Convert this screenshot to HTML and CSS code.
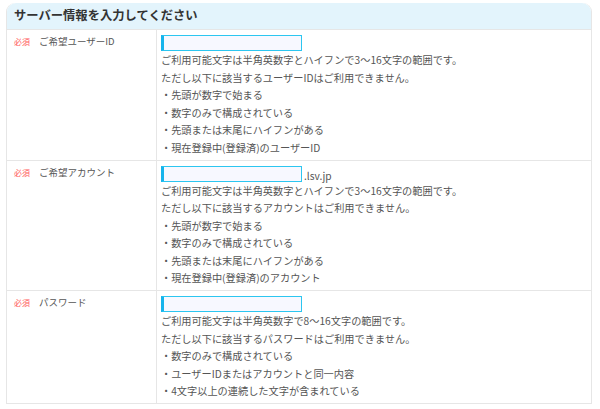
FILE: index.html
```html
<!DOCTYPE html>
<html lang="ja">
<head>
<meta charset="utf-8">
<link rel="stylesheet" href="styles.css">
</head>
<body>
<div class="panel">
  <div class="panel-head">サーバー情報を入力してください</div>
  <div class="row">
    <div class="label"><span class="req">必須</span><span class="name">ご希望ユーザーID</span></div>
    <div class="value">
      <div class="field"><span class="input"></span></div>
      <p>ご利用可能文字は半角英数字とハイフンで3～16文字の範囲です。</p>
      <p>ただし以下に該当するユーザーIDはご利用できません。</p>
      <p>・先頭が数字で始まる</p>
      <p>・数字のみで構成されている</p>
      <p>・先頭または末尾にハイフンがある</p>
      <p>・現在登録中(登録済)のユーザーID</p>
    </div>
  </div>
  <div class="row">
    <div class="label"><span class="req">必須</span><span class="name">ご希望アカウント</span></div>
    <div class="value">
      <div class="field"><span class="input"></span><span class="suffix">.lsv.jp</span></div>
      <p>ご利用可能文字は半角英数字とハイフンで3～16文字の範囲です。</p>
      <p>ただし以下に該当するアカウントはご利用できません。</p>
      <p>・先頭が数字で始まる</p>
      <p>・数字のみで構成されている</p>
      <p>・先頭または末尾にハイフンがある</p>
      <p>・現在登録中(登録済)のアカウント</p>
    </div>
  </div>
  <div class="row">
    <div class="label"><span class="req">必須</span><span class="name">パスワード</span></div>
    <div class="value">
      <div class="field"><span class="input"></span></div>
      <p>ご利用可能文字は半角英数字で8～16文字の範囲です。</p>
      <p>ただし以下に該当するパスワードはご利用できません。</p>
      <p>・数字のみで構成されている</p>
      <p>・ユーザーIDまたはアカウントと同一内容</p>
      <p>・4文字以上の連続した文字が含まれている</p>
    </div>
  </div>
</div>
</body>
</html>
```
FILE: styles.css
```css
html, body {
  margin: 0;
  padding: 0;
  background: #ffffff;
}
body {
  font-family: "Noto Sans CJK JP", "Noto Sans", sans-serif;
  color: #555555;
}
.panel {
  margin: 3px 0 0 6px;
  width: 584px;
  border: 1px solid #e6e6e6;
  border-top: none;
  border-radius: 9px 9px 0 0;
}
.panel-head {
  height: 26px;
  box-sizing: border-box;
  padding: 4px 0 0 7px;
  background: #e3f4fc;
  border-radius: 9px 9px 0 0;
  font-size: 12.3px;
  line-height: 17px;
  font-weight: bold;
  color: #333333;
}
.row {
  display: flex;
  border-top: 1px solid #e6e6e6;
}
.label {
  width: 150px;
  flex: none;
  border-right: 1px solid #e6e6e6;
  padding: 3px 0 0 7px;
  box-sizing: border-box;
  display: flex;
  align-items: baseline;
  gap: 9px;
  line-height: 17px;
}
.req {
  color: #ff5a5a;
  font-size: 8px;
}
.name {
  font-size: 9.5px;
  color: #555555;
}
.value {
  flex: 1;
  padding: 5px 0 3.5px 4px;
}
.field {
  display: flex;
  align-items: flex-end;
  height: 16px;
}
.input {
  display: block;
  width: 137px;
  height: 14px;
  background: #f7f8ff;
  border: 1px solid #2cc6f0;
  border-left: 3px solid #16b4ec;
}
.suffix {
  font-size: 10.2px;
  line-height: 13px;
  margin-left: 2px;
  color: #555555;
}
.value p {
  margin: 0;
  font-size: 10.2px;
  line-height: 17.5px;
  white-space: nowrap;
}
```
